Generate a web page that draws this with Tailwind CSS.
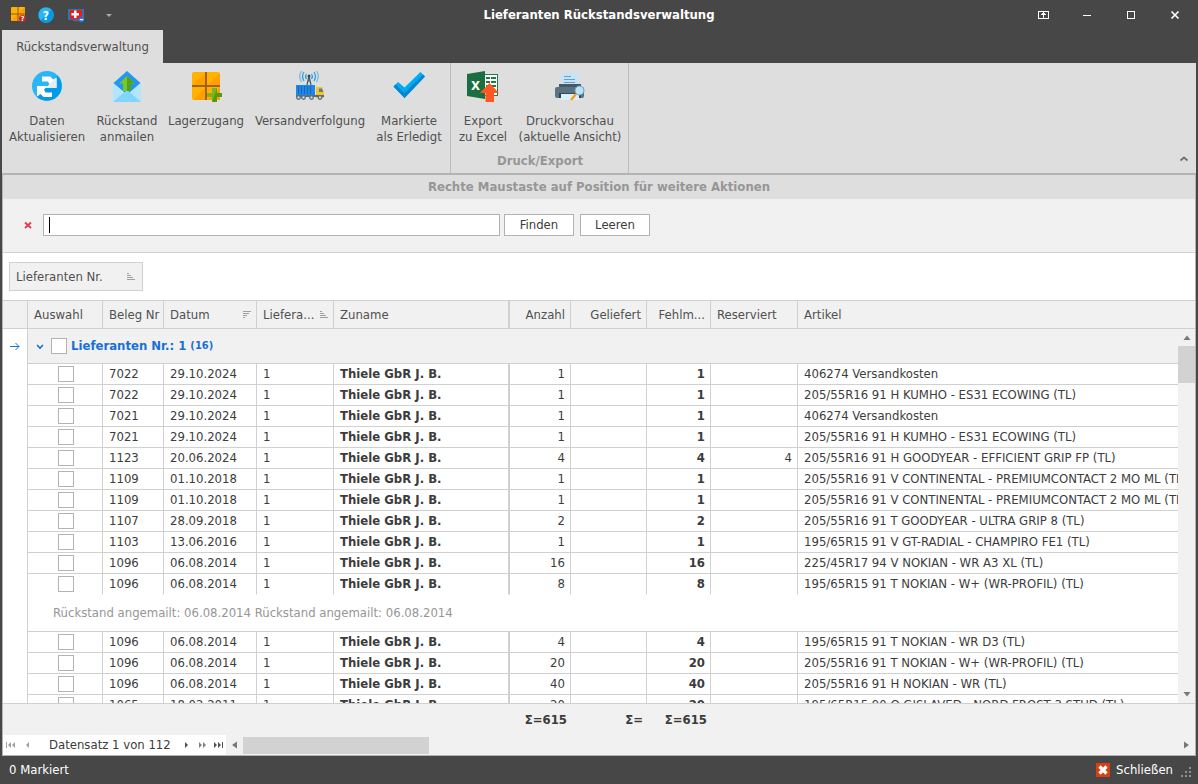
<!DOCTYPE html>
<html lang="de">

<head>
    <meta charset="utf-8" />
    <meta name="viewport" content="width=device-width, initial-scale=1" />
    <title>Lieferanten Rückstandsverwaltung</title>
    <script src="https://cdn.jsdelivr.net/npm/@tailwindcss/browser@4"></script>
</head>

<body class="flex h-screen flex-col overflow-hidden bg-[#474747] font-['DejaVu_Sans_Condensed','DejaVu_Sans',sans-serif] text-[13px] leading-4 text-[#3c3c3c]">

    <!-- Title bar -->
    <header class="grid h-[30px] shrink-0 grid-cols-[1fr_auto_1fr] items-center text-white">
        <div class="flex items-center gap-3 pl-[10px]">
            <button aria-label="Lager">
                <svg class="block size-4" viewBox="0 0 16 16">
                    <rect x="1" y="0" width="14" height="14" rx="1" fill="#ffb300" />
                    <path d="M8 7l7-7v14H1l7-7z" fill="#ffa000" />
                    <path d="M7.500 0h1v14h-1zM1 6.500h14v1H1z" fill="#8a5a1c" />
                    <circle cx="12.500" cy="11.500" r="3.500" fill="#c62828" />
                    <text x="12.500" y="14" text-anchor="middle" font-size="7" font-weight="bold" fill="#fff">?</text>
                </svg>
            </button>
            <button aria-label="Hilfe">
                <svg class="block size-4" viewBox="0 0 16 16">
                    <circle cx="8" cy="8" r="7.700" fill="#29b6f6" />
                    <path d="M13.500 2.500A7.700 7.700 0 0 1 2.500 13.500z" fill="#039be5" />
                    <text x="8" y="12.500" text-anchor="middle" font-size="12" font-weight="bold" fill="#fff">?</text>
                </svg>
            </button>
            <button aria-label="Fernwartung" class="ml-[2px]">
                <svg class="block size-4" viewBox="0 0 16 16">
                    <rect x="0" y="2" width="16" height="11" fill="#2878b8" />
                    <rect x="2" y="3" width="12" height="9" fill="#f01818" />
                    <rect x="5" y="13" width="6" height="1.500" fill="#58616b" />
                    <path d="M6 3.500h2.500v2.500H11v2.500H8.500V11H6V8.500H3.500V6H6z" fill="#fff" />
                    <circle cx="13.500" cy="12.500" r="2.700" fill="#1e78e0" />
                    <path d="M11.800 12h3.400v1.200h-3.400z" fill="#fff" />
                </svg>
            </button>
            <button aria-label="Schnellzugriff anpassen" class="ml-[7px]">
                <svg class="block size-3" viewBox="0 0 12 12"><path d="M3 5h6L6 8z" fill="#a8a8a8" /></svg>
            </button>
        </div>
        <h1 class="font-bold">Lieferanten Rückstandsverwaltung</h1>
        <div class="flex justify-end pr-px">
            <button aria-label="Menüband" class="flex w-11 justify-center">
                <svg class="h-4 w-[13px]" viewBox="0 0 13 16" shape-rendering="crispEdges">
                    <rect x="1.500" y="4.500" width="10" height="7" fill="none" stroke="#fff" />
                    <path d="M6 5h1v6H6zM5 6h3v1H5zM4 7h5v1H4z" fill="#fff" />
                </svg>
            </button>
            <button aria-label="Minimieren" class="flex w-11 justify-center">
                <svg class="size-4" viewBox="0 0 16 16" shape-rendering="crispEdges"><path d="M4 8h8v1H4z" fill="#fff" /></svg>
            </button>
            <button aria-label="Maximieren" class="flex w-11 justify-center">
                <svg class="size-4" viewBox="0 0 16 16" shape-rendering="crispEdges"><rect x="4.500" y="4.500" width="7" height="7" fill="none" stroke="#fff" /></svg>
            </button>
            <button aria-label="Fenster schließen" class="flex w-11 justify-center">
                <svg class="size-4" viewBox="0 0 16 16"><path d="M4.500 4.500l7 7M11.500 4.500l-7 7" stroke="#fff" stroke-width="1.700" /></svg>
            </button>
        </div>
    </header>

    <div class="flex min-h-0 flex-1 flex-col px-[2px]">
        <!-- Ribbon -->
        <nav class="flex shrink-0">
            <button class="h-[33px] w-[161px] bg-[#dedede] text-[#505050]">Rückstandsverwaltung</button>
        </nav>
        <section class="relative flex h-[110px] shrink-0 bg-[#dedede] text-center whitespace-nowrap text-[#505050]">
            <div class="flex items-start border-r border-[#bcbcbc] pr-[7px] pl-[5px]">
                <button class="flex w-20 flex-col items-center gap-[10px] pt-2">
                    <svg class="size-8" viewBox="0 0 32 32">
                        <circle cx="16" cy="15" r="15" fill="#29b6f6" />
                        <path d="M26.600 4.400A15 15 0 0 1 5.400 25.600z" fill="#039be5" />
                        <path d="M11 5.500h8.500l2.500 3 3.500-2V17H14.500l4-3.500-1.500-3h-6z" fill="#fff" />
                        <path d="M21 26h-8.500L9.500 23 6 25.500V15h11l-4 3.500 1.500 3H21z" fill="#fff" />
                        <path d="M25.500 6.500V17h-11z" fill="#e3edf2" />
                    </svg>
                    <span>Daten<br>Aktualisieren</span>
                </button>
                <button class="flex w-20 flex-col items-center gap-[10px] pt-2">
                    <svg class="size-8" viewBox="0 0 32 32">
                        <path d="M2 12h28v19H2z" fill="#b3e5fc" />
                        <path d="M16 0l13.500 12L16 24 2.500 12z" fill="#2196f3" />
                        <path d="M2 12l11 9L2 31zM30 12l-11 9 11 10z" fill="#b3e5fc" />
                        <path d="M2 31l14-12 14 12z" fill="#81d4fa" />
                        <path d="M16 5l8 7.500h-4V20h-8v-7.500H8z" fill="#7ac52a" />
                        <path d="M16 5l8 7.500h-4V20h-4z" fill="#54a414" />
                    </svg>
                    <span>Rückstand<br>anmailen</span>
                </button>
                <button class="flex w-[78px] flex-col items-center gap-[10px] pt-2">
                    <svg class="size-8" viewBox="0 0 32 32">
                        <rect x="2" y="1" width="28" height="28" rx="2" fill="#ffb300" />
                        <path d="M15 2v12H3zM30 2v12H18zM15 17v12H3zM30 17v12H18z" fill="#ffa000" />
                        <path d="M15 1h2v28h-2zM2 14h28v2H2z" fill="#a0611a" />
                        <path d="M22 17h5v5h5v4h-5v5h-5v-5h-5v-4h5z" fill="#7cb518" />
                        <path d="M27 17v5h5v4h-5v5h-5z" fill="#559b10" />
                    </svg>
                    <span>Lagerzugang</span>
                </button>
                <button class="flex w-[130px] flex-col items-center gap-[10px] pt-2">
                    <svg class="size-8" viewBox="0 0 32 32">
                        <g fill="none" stroke="#29a0e0" stroke-width="1.200">
                            <path d="M10 1Q7 5.500 10 10M12.500 3q-2 2.500 0 5M20 1q3 4.500 0 9M17.500 3q2 2.500 0 5" />
                            <path d="M7.500 0q-3.500 5.500 0 11M22.500 0q3.500 5.500 0 11" opacity=".6" />
                        </g>
                        <path d="M15 5l-2 9M15 5l2 9M13.500 10h3" stroke="#455a64" stroke-width="1.200" />
                        <circle cx="15" cy="5" r="1.500" fill="#37474f" />
                        <path d="M2 14h19v10H2z" fill="#1e88e5" />
                        <path d="M4 15h1v8H4zM7 15h1v8H7zM10 15h1v8h-1zM13 15h1v8h-1zM16 15h1v8h-1z" fill="#1565c0" />
                        <path d="M22 16h6l2 5v6h-8z" fill="#fbc02d" />
                        <path d="M25 17.500h3l1.200 3.500H25z" fill="#607d8b" />
                        <path d="M2 24h28v2H2z" fill="#546e7a" />
                        <g fill="#cfd8dc" stroke="#5f7078" stroke-width="1.300">
                            <circle cx="4.500" cy="26.500" r="1.800" /><circle cx="9.500" cy="26.500" r="1.800" /><circle cx="17.500" cy="26.500" r="1.800" /><circle cx="26" cy="26.500" r="1.800" />
                        </g>
                    </svg>
                    <span>Versandverfolgung</span>
                </button>
                <button class="flex w-[68px] flex-col items-center gap-[10px] pt-2">
                    <svg class="size-8" viewBox="0 0 32 32">
                        <path d="M.500 15.500L5 11l6.500 5.500L27.500 1 32 5.500 11.500 27z" fill="#03a9f4" />
                        <path d="M32 5.500L11.500 27 .500 15.500l2-2 9 8.500L30 3.500z" fill="#0288d1" />
                    </svg>
                    <span>Markierte<br>als Erledigt</span>
                </button>
            </div>
            <div class="flex flex-col justify-between border-r border-[#bcbcbc] pr-px pb-1 pl-[2px]">
                <div class="flex items-start">
                    <button class="flex w-[60px] flex-col items-center gap-[10px] pt-2">
                        <svg class="size-8" viewBox="0 0 32 32">
                            <path d="M18 3h13v22H18z" fill="#1f7a48" />
                            <path d="M18 4h12v20H18z" fill="#fff" />
                            <path d="M19 6h4v2h-4zM24 6h5v2h-5zM19 10h4v2h-4zM24 10h5v2h-5zM19 14h4v2h-4zM24 14h5v2h-5z" fill="#1f7a48" />
                            <path d="M0 3l18-3v28L0 25z" fill="#1b6e3f" />
                            <text x="8.500" y="19" text-anchor="middle" font-size="13" font-weight="bold" fill="#fff">X</text>
                            <path d="M22.500 12L32 22h-5v9h-8.500v-9H13z" fill="#ff5722" />
                        </svg>
                        <span>Export<br>zu Excel</span>
                    </button>
                    <button class="flex w-[114px] flex-col items-center gap-[10px] pt-2">
                        <svg class="size-8" viewBox="0 0 32 32">
                            <path d="M8 2h13l3 3v11H8z" fill="#c4e4fb" />
                            <path d="M10 5h7v1h-7zM10 8h11v1H10zM10 11h11v1H10z" fill="#6a9dc8" />
                            <path d="M5 13h22v5H5z" fill="#455a64" />
                            <rect x="1" y="16" width="29" height="11" rx="2" fill="#5b7282" />
                            <path d="M5 22h22v5H5z" fill="#37474f" />
                            <path d="M7 23h18v6H7z" fill="#d8effc" />
                            <path d="M22 23l-5 6" stroke="#ff9d1e" stroke-width="2.500" />
                            <circle cx="25.500" cy="19.500" r="4.500" fill="#b8e3fb" stroke="#6f9fc0" />
                        </svg>
                        <span>Druckvorschau<br>(aktuelle Ansicht)</span>
                    </button>
                </div>
                <h2 class="font-bold text-[#969696]">Druck/Export</h2>
            </div>
            <button aria-label="Menüband reduzieren" class="ml-auto self-end pr-[6px] pb-2">
                <svg class="block size-3" viewBox="0 0 12 12"><path d="M2.500 7.500L6 4.500l3.500 3" fill="none" stroke="#707070" stroke-width="1.800" /></svg>
            </button>
        </section>

        <main class="flex min-h-0 flex-1 flex-col border border-t-2 border-[#b3b3b3] bg-[#f1f1f1]">
            <p class="h-6 shrink-0 bg-[#dedede] pt-1 text-center font-bold text-[#969696]">Rechte Maustaste auf Position für weitere Aktionen</p>

            <!-- Search -->
            <form class="flex h-[54px] shrink-0 items-center border-b border-[#d0d0d0] pb-px pl-[21px]">
                <button type="button" aria-label="Suche schließen" class="mr-[11px]">
                    <svg class="block size-2" viewBox="0 0 8 8"><path d="M1 1.500l6 5.500M7 1.500L1 7" stroke="#e23b4c" stroke-width="1.800" /></svg>
                </button>
                <label class="relative mr-1 block w-[457px]">
                    <input type="text" aria-label="Suchtext" class="block h-[22px] w-full border border-[#b3b3b3] bg-white px-[6px]" />
                    <span class="absolute top-[3px] left-[6px] h-4 w-px bg-black"></span>
                </label>
                <button type="button" class="mr-[6px] h-[22px] w-[70px] border border-[#b3b3b3] bg-white">Finden</button>
                <button type="button" class="h-[22px] w-[70px] border border-[#b3b3b3] bg-white">Leeren</button>
            </form>

            <!-- Group panel -->
            <div class="shrink-0 bg-white px-[6px] py-[9px]">
                <button class="flex h-[29px] w-[134px] items-center justify-between border border-[#d0d0d0] bg-[#f1f1f1] pr-[7px] pl-[6px] text-[#505050]">
                    Lieferanten Nr.
                    <svg class="h-[7px] w-2" viewBox="0 0 8 7" shape-rendering="crispEdges"><path d="M0 0h2v1H0zM0 2h4v1H0zM0 4h6v1H0zM0 6h8v1H0z" fill="#a0a0a0" /></svg>
                </button>
            </div>

            <!-- Grid -->
            <div class="relative min-h-0 flex-1 overflow-hidden border-y border-[#d0d0d0] bg-white">
                <table class="w-full table-fixed border-separate border-spacing-0 whitespace-nowrap">
                    <colgroup>
                        <col class="w-[25px]"><col class="w-[75px]"><col class="w-[61px]"><col class="w-[93px]"><col class="w-[77px]"><col class="w-[176px]"><col class="w-[61px]"><col class="w-[76px]"><col class="w-[64px]"><col class="w-[87px]"><col>
                    </colgroup>
                    <thead class="bg-[#f1f1f1] text-left text-[#505050] [&_th]:h-7 [&_th]:border-r [&_th]:border-b [&_th]:border-[#d0d0d0] [&_th]:pr-[5px] [&_th]:pl-[6px] [&_th]:font-normal">
                        <tr>
                            <th></th>
                            <th>Auswahl</th>
                            <th class="pr-0!">Beleg Nr</th>
                            <th>
                                <div class="flex items-center justify-between">Datum
                                    <svg class="h-[7px] w-2" viewBox="0 0 8 7" shape-rendering="crispEdges"><path d="M0 0h8v1H0zM0 2h6v1H0zM0 4h4v1H0zM0 6h2v1H0z" fill="#a0a0a0" /></svg>
                                </div>
                            </th>
                            <th>
                                <div class="flex items-center justify-between">Liefera...
                                    <svg class="h-[7px] w-2" viewBox="0 0 8 7" shape-rendering="crispEdges"><path d="M0 0h2v1H0zM0 2h4v1H0zM0 4h6v1H0zM0 6h8v1H0z" fill="#a0a0a0" /></svg>
                                </div>
                            </th>
                            <th class="border-r-2!">Zuname</th>
                            <th class="text-right">Anzahl</th>
                            <th class="text-right">Geliefert</th>
                            <th class="text-right">Fehlm...</th>
                            <th>Reserviert</th>
                            <th class="border-r-0!">Artikel</th>
                        </tr>
                    </thead>
                    <tbody id="rows">
                        <tr>
                            <td class="border-r border-[#d0d0d0]">
                                <svg class="ml-[7px] h-[9px] w-[10px]" viewBox="0 0 10 9"><path d="M0 4.500h9M5.500 1l3.500 3.500L5.500 8" fill="none" stroke="#1a6fd6" /></svg>
                            </td>
                            <td colspan="10" class="h-[35px] border-b border-[#d0d0d0] bg-[#f1f1f1] pl-2">
                                <label class="flex items-center font-bold text-[#1a6fd6]">
                                    <svg class="mr-[7px] size-2" viewBox="0 0 8 8"><path d="M1 3l3 3 3-3" fill="none" stroke="#1a6fd6" stroke-width="1.600" /></svg>
                                    <input type="checkbox" class="mr-1 size-4 appearance-none border border-[#b3b3b3] bg-white" />
                                    Lieferanten Nr.: 1 <span class="ml-1 text-[11px]">(16)</span>
                                </label>
                            </td>
                        </tr>
                    </tbody>
                </table>

                <!-- Vertical scrollbar -->
                <div class="absolute top-7 right-0 bottom-0 flex w-[17px] flex-col items-center bg-[#f1f1f1]">
                    <svg class="h-[17px] w-2 shrink-0" viewBox="0 0 8 17"><path d="M0.500 11h7L4 6.500z" fill="#777" /></svg>
                    <div class="h-[37px] w-full bg-[#d2d2d2]"></div>
                    <svg class="mt-auto h-[17px] w-2 shrink-0" viewBox="0 0 8 17"><path d="M0.500 6h7L4 10.500z" fill="#777" /></svg>
                </div>
            </div>

            <!-- Totals -->
            <div class="flex h-[31px] shrink-0 items-center pl-[507px] text-right font-bold">
                <span class="w-[61px] pr-1">Σ=615</span>
                <span class="w-[76px] pr-1">Σ=</span>
                <span class="w-[64px] pr-1">Σ=615</span>
            </div>

            <!-- Record navigator and horizontal scrollbar -->
            <div class="flex h-5 shrink-0 items-center">
                <div class="flex h-full w-[223px] items-center bg-white">
                    <button aria-label="Erster" class="ml-[3px]"><svg class="block h-[6px] w-[9px]" viewBox="0 0 9 6"><path d="M0 0h1v6H0zM5 0v6L2 3zM9 0v6L6 3z" fill="#a0a0a0" /></svg></button>
                    <button aria-label="Vorheriger" class="ml-[11px]"><svg class="block h-[6px] w-[3px]" viewBox="0 0 3 6"><path d="M3 0v6L0 3z" fill="#a0a0a0" /></svg></button>
                    <span class="w-[156px] pl-5 whitespace-nowrap">Datensatz 1 von 112</span>
                    <button aria-label="Nächster"><svg class="block h-[6px] w-[3px]" viewBox="0 0 3 6"><path d="M0 0v6l3-3z" fill="#505050" /></svg></button>
                    <button aria-label="Nächste Seite" class="ml-[11px]"><svg class="block h-[6px] w-[7px]" viewBox="0 0 7 6"><path d="M0 0v6l3-3zM4 0v6l3-3z" fill="#808080" /></svg></button>
                    <button aria-label="Letzter" class="ml-2"><svg class="block h-[6px] w-[9px]" viewBox="0 0 9 6"><path d="M0 0v6l3-3zM4 0v6l3-3zM8 0h1v6H8z" fill="#505050" /></svg></button>
                </div>
                <div class="flex flex-1 items-center">
                    <svg class="h-2 w-[17px]" viewBox="0 0 17 8"><path d="M11 0.500v7L6 4z" fill="#777" /></svg>
                    <div class="h-[17px] w-[186px] bg-[#d2d2d2]"></div>
                    <svg class="ml-auto h-2 w-[17px]" viewBox="0 0 17 8"><path d="M6 0.500v7L11 4z" fill="#777" /></svg>
                </div>
            </div>
        </main>
    </div>

    <!-- Status bar -->
    <footer class="flex h-7 shrink-0 items-center pr-[6px] pl-[9px] text-white">
        <span>0 Markiert</span>
        <button class="mr-2 ml-auto flex items-center gap-[6px]">
            <svg class="size-[14px]" viewBox="0 0 14 14">
                <rect width="14" height="14" fill="#d9400f" />
                <path d="M3.500 3.500l7 7M10.500 3.500l-7 7" stroke="#fff" stroke-width="3.200" />
            </svg>
            Schließen
        </button>
        <svg class="mt-1 size-[11px]" viewBox="0 0 11 11" shape-rendering="crispEdges"><path d="M8 0h2v2H8zM4 4h2v2H4zM8 4h2v2H8zM0 8h2v2H0zM4 8h2v2H4zM8 8h2v2H8z" fill="#909090" /></svg>
    </footer>

    <script>
        // beleg, datum, anzahl, reserviert, artikel, note
        const orders = [
            ['7022', '29.10.2024', 1, '', '406274 Versandkosten'],
            ['7022', '29.10.2024', 1, '', '205/55R16 91 H KUMHO - ES31 ECOWING (TL)'],
            ['7021', '29.10.2024', 1, '', '406274 Versandkosten'],
            ['7021', '29.10.2024', 1, '', '205/55R16 91 H KUMHO - ES31 ECOWING (TL)'],
            ['1123', '20.06.2024', 4, '4', '205/55R16 91 H GOODYEAR - EFFICIENT GRIP FP (TL)'],
            ['1109', '01.10.2018', 1, '', '205/55R16 91 V CONTINENTAL - PREMIUMCONTACT 2 MO ML (TL)'],
            ['1109', '01.10.2018', 1, '', '205/55R16 91 V CONTINENTAL - PREMIUMCONTACT 2 MO ML (TL)'],
            ['1107', '28.09.2018', 2, '', '205/55R16 91 T GOODYEAR - ULTRA GRIP 8 (TL)'],
            ['1103', '13.06.2016', 1, '', '195/65R15 91 V GT-RADIAL - CHAMPIRO FE1 (TL)'],
            ['1096', '06.08.2014', 16, '', '225/45R17 94 V NOKIAN - WR A3 XL (TL)'],
            ['1096', '06.08.2014', 8, '', '195/65R15 91 T NOKIAN - W+ (WR-PROFIL) (TL)', 'Rückstand angemailt: 06.08.2014 Rückstand angemailt: 06.08.2014'],
            ['1096', '06.08.2014', 4, '', '195/65R15 91 T NOKIAN - WR D3 (TL)'],
            ['1096', '06.08.2014', 20, '', '205/55R16 91 T NOKIAN - W+ (WR-PROFIL) (TL)'],
            ['1096', '06.08.2014', 40, '', '205/55R16 91 H NOKIAN - WR (TL)'],
            ['1065', '18.02.2011', 20, '', '195/65R15 90 Q GISLAVED - NORD FROST 3 STUD (TL)']
        ];

        const tbody = document.getElementById('rows');

        orders.forEach(([beleg, datum, anzahl, reserviert, artikel, note]) => {
            const line = note ? 'border-b-transparent' : 'border-b-[#d0d0d0]';
            const cell = `h-[21px] border-r border-b border-r-[#d0d0d0] pr-[5px] pl-[6px] ${line}`;
            tbody.insertAdjacentHTML('beforeend', `
                <tr>
                    <td class="border-r border-[#d0d0d0]"></td>
                    <td class="${cell}"><input type="checkbox" aria-label="Beleg ${beleg} auswählen" class="mx-auto block size-4 appearance-none border border-[#b3b3b3] bg-white" /></td>
                    <td class="${cell}">${beleg}</td>
                    <td class="${cell}">${datum}</td>
                    <td class="${cell}">1</td>
                    <td class="${cell} border-r-2! font-bold">Thiele GbR J. B.</td>
                    <td class="${cell} text-right">${anzahl}</td>
                    <td class="${cell}"></td>
                    <td class="${cell} text-right font-bold">${anzahl}</td>
                    <td class="${cell} text-right">${reserviert}</td>
                    <td class="${cell} border-r-0! overflow-hidden">${artikel}</td>
                </tr>
            `);
            if (note) {
                tbody.insertAdjacentHTML('beforeend', `
                    <tr>
                        <td class="border-r border-[#d0d0d0]"></td>
                        <td colspan="10" class="h-[37px] border-b border-[#d0d0d0] pl-[25px] text-[#969696]">${note}</td>
                    </tr>
                `);
            }
        });
    </script>
</body>

</html>
